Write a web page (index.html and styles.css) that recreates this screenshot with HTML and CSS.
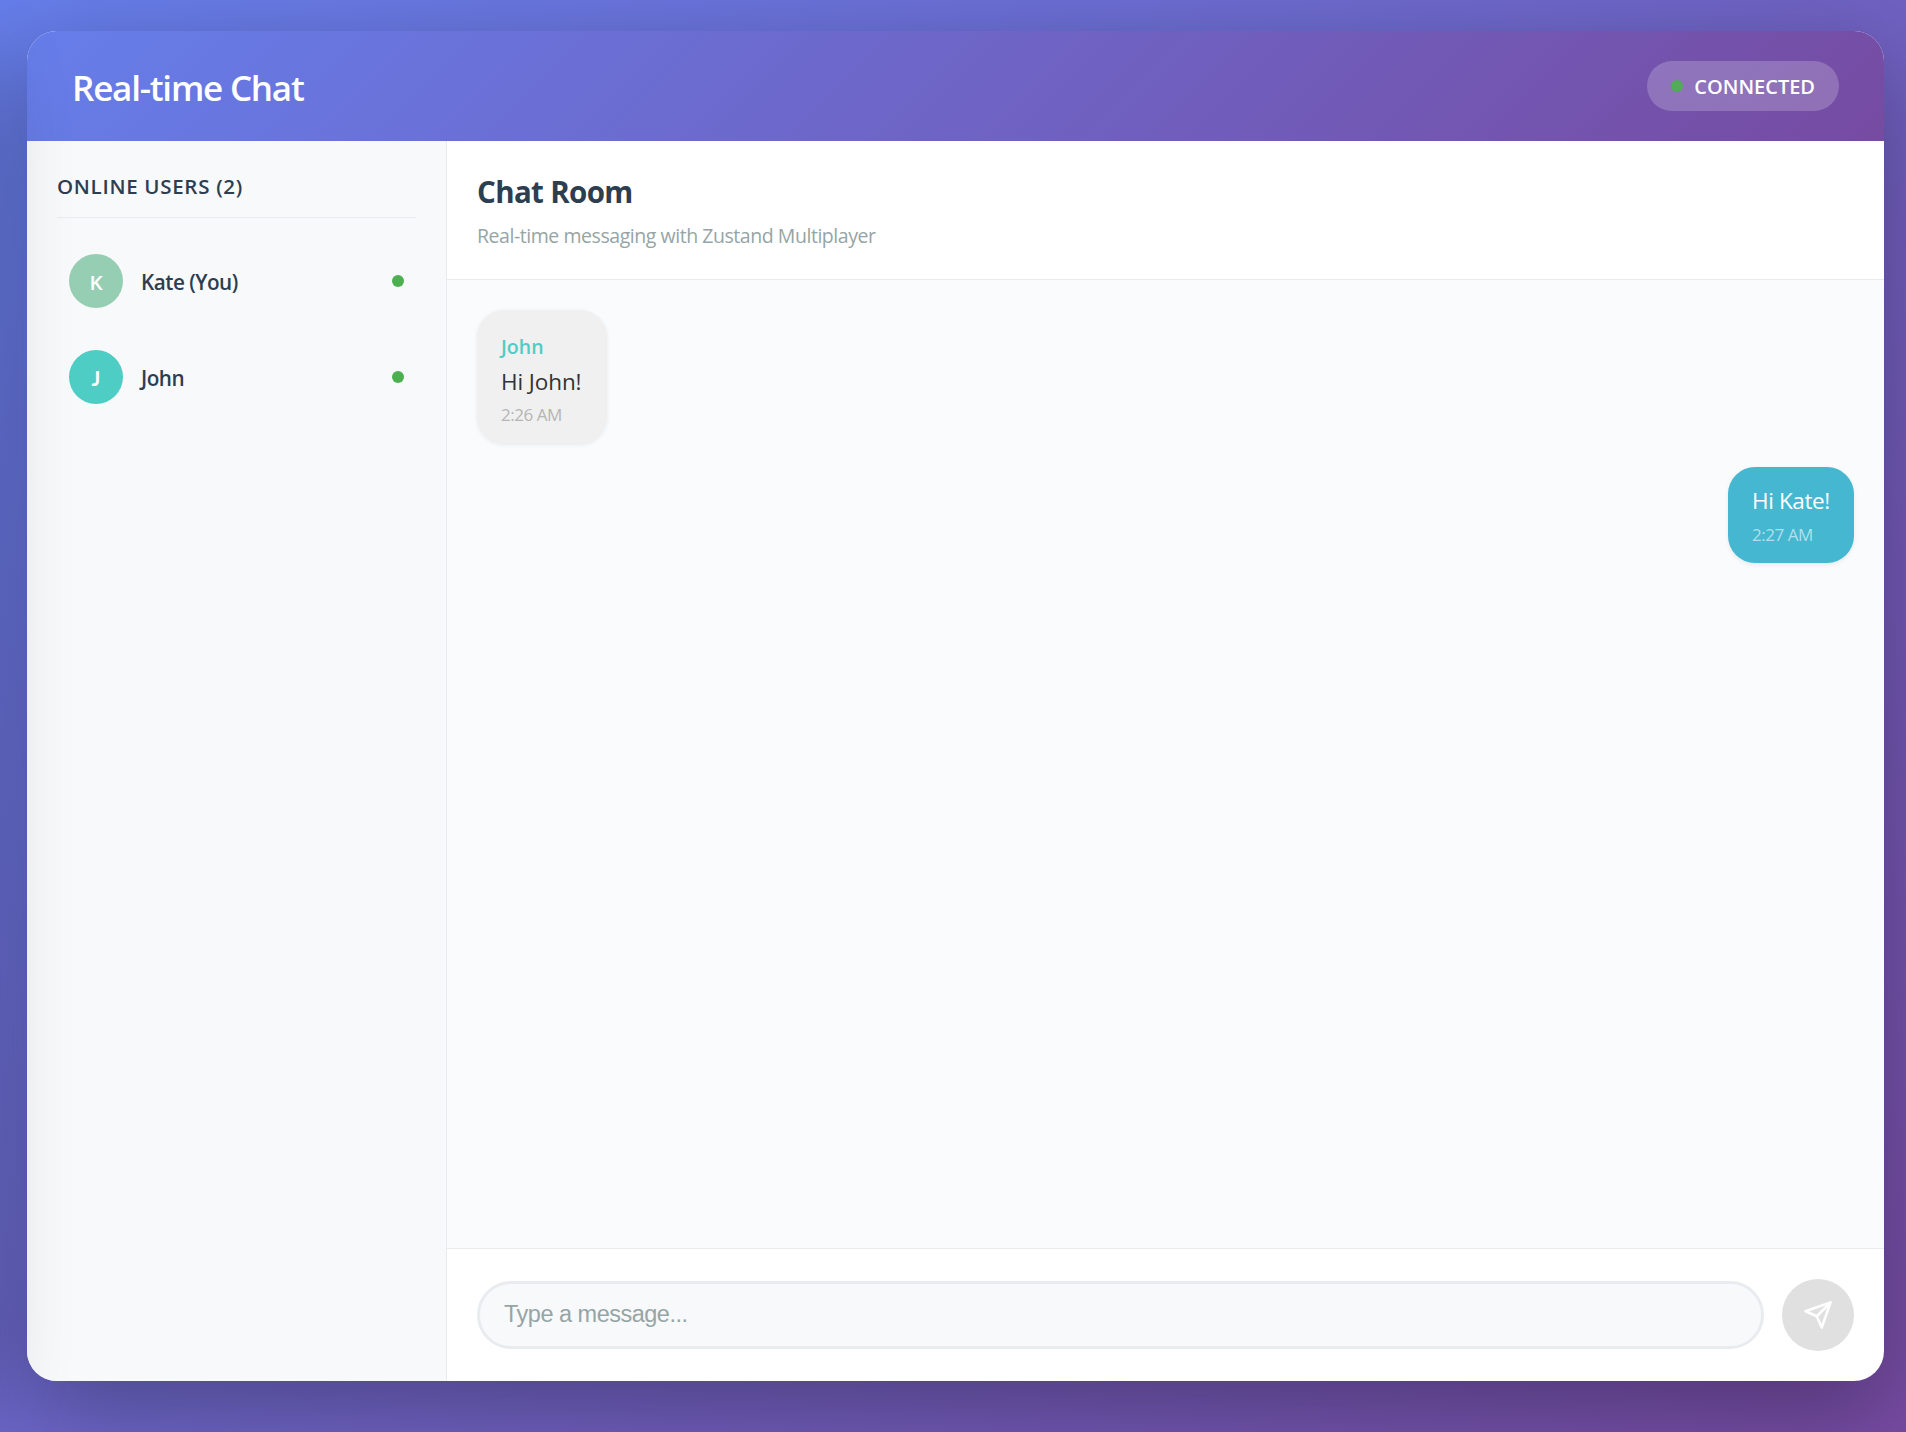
FILE: index.html
```html
<!DOCTYPE html>
<html lang="en">
<head>
<meta charset="utf-8">
<title>Real-time Chat</title>
<link rel="stylesheet" href="styles.css">
</head>
<body>
<div class="app">
  <header class="app-header">
    <h1 class="app-title">Real-time Chat</h1>
    <div class="status"><span class="dot dot-soft"></span><span class="status-text">CONNECTED</span></div>
  </header>
  <div class="app-body">
    <aside class="sidebar">
      <h3 class="sidebar-title">ONLINE USERS (2)</h3>
      <ul class="users">
        <li class="user"><span class="avatar avatar-kate">K</span><span class="user-name">Kate (You)</span><span class="dot"></span></li>
        <li class="user"><span class="avatar avatar-john">J</span><span class="user-name">John</span><span class="dot"></span></li>
      </ul>
    </aside>
    <main class="chat">
      <div class="chat-header">
        <h2 class="chat-title">Chat Room</h2>
        <p class="chat-subtitle">Real-time messaging with Zustand Multiplayer</p>
      </div>
      <div class="messages">
        <div class="bubble bubble-other">
          <div class="sender">John</div>
          <div class="text">Hi John!</div>
          <div class="time">2:26 AM</div>
        </div>
        <div class="bubble bubble-own">
          <div class="text">Hi Kate!</div>
          <div class="time">2:27 AM</div>
        </div>
      </div>
      <form class="composer">
        <input class="composer-input" type="text" placeholder="Type a message...">
        <button class="send" type="button" aria-label="Send">
          <svg class="send-icon" viewBox="0 0 24 24" fill="none" stroke="currentColor" stroke-width="2" stroke-linecap="round" stroke-linejoin="round"><path d="M22 2 11 13"/><path d="M22 2 15 22 11 13 2 9Z"/></svg>
        </button>
      </form>
    </main>
  </div>
</div>
<div class="edge-shade"></div>
</body>
</html>
```
FILE: styles.css
```css
* { box-sizing: border-box; margin: 0; padding: 0; }

body {
  height: 100vh;
  padding: 31px 22px 51px 27px;
  overflow: hidden;
  position: relative;
  font-family: "Open Sans", "Noto Sans", sans-serif;
  color: #2c3e50;
  background: linear-gradient(135deg, #667eea 0%, #764ba2 100%);
}

.app {
  height: 100%;
  display: flex;
  flex-direction: column;
  overflow: hidden;
  background: #fff;
  border-radius: 30px;
  box-shadow: 0 30px 90px rgba(0, 0, 0, .3);
}

/* Shadow cast across the left side of the page */
.edge-shade {
  position: absolute;
  top: 31px;
  bottom: 51px;
  left: -322px;
  width: 300px;
  border-radius: 30px;
  box-shadow: 0 30px 90px rgba(0, 0, 0, .3);
  pointer-events: none;
}

.app-header {
  height: 110px;
  padding: 0 45px;
  display: flex;
  align-items: center;
  justify-content: space-between;
  color: #fff;
  background: linear-gradient(135deg, #667eea 0%, #764ba2 100%);
}

.app-title {
  padding-top: 3px;
  font-size: 35px;
  font-weight: 600;
  line-height: 48px;
  letter-spacing: -1.22px;
}

.status {
  height: 50px;
  padding: 0 24px;
  display: flex;
  align-items: center;
  gap: 11px;
  border-radius: 25px;
  background: rgba(255, 255, 255, .2);
}

.status-text { padding-top: 2px; font-size: 20px; font-weight: 600; line-height: 28px; }

.dot { width: 12px; height: 12px; flex: none; border-radius: 50%; background: #4caf50; }
.dot-soft { opacity: .93; }

.app-body { flex: 1; min-height: 0; display: flex; }

.sidebar {
  width: 420px;
  flex: none;
  padding: 30px;
  background: #f8f9fb;
  border-right: 1px solid #e9ecef;
}

.sidebar-title {
  margin-bottom: 24px;
  padding: 1px 0 16px;
  border-bottom: 1px solid #e9ecef;
  font-size: 20.5px;
  font-weight: 600;
  line-height: 29px;
  letter-spacing: .7px;
}

.users { display: flex; flex-direction: column; gap: 18px; list-style: none; }
.user { height: 78px; padding: 12px; display: flex; align-items: center; gap: 18px; }

.avatar {
  width: 54px;
  height: 54px;
  padding-top: 1px;
  display: flex;
  align-items: center;
  justify-content: center;
  border-radius: 50%;
  color: #fff;
  font-size: 20.5px;
  font-weight: 600;
}
.avatar-kate { background: #96ceb4; }
.avatar-john { background: #4ecdc4; font-family: "Lato", sans-serif; font-weight: 700; }

.user-name { flex: 1; padding-top: 2px; font-size: 20.7px; font-weight: 600; letter-spacing: -.5px; }

.chat { flex: 1; min-width: 0; display: flex; flex-direction: column; }
.chat-header { padding: 30px 30px 27px; border-bottom: 1px solid #e9ecef; }

.chat-title {
  margin-bottom: 7px;
  font-size: 29.5px;
  font-weight: 700;
  line-height: 41px;
  letter-spacing: -.65px;
}

.chat-subtitle { color: #95a5a6; font-size: 19.5px; line-height: 33px; letter-spacing: -.45px; }

.messages {
  flex: 1;
  padding: 30px;
  display: flex;
  flex-direction: column;
  align-items: flex-start;
  gap: 24px;
  background: #fafbfd;
}

.bubble {
  padding: 18px 24px 16px;
  border-radius: 27px;
  box-shadow: 0 1.5px 4.5px rgba(0, 0, 0, .07);
}
.bubble-other { width: 129.5px; background: #f0f0f0; color: #333; }
.bubble-own { width: 126px; align-self: flex-end; background: #45b7d1; color: #fff; }
.bubble-own .text { letter-spacing: -.4px; }

.sender { margin-bottom: 1px; color: #4ecdc4; font-size: 19.5px; font-weight: 600; line-height: 37px; }
.text { font-size: 22.5px; line-height: 31px; white-space: nowrap; letter-spacing: -.1px; }
.time { margin-top: 5px; font-size: 17px; line-height: 25px; letter-spacing: -.45px; color: #b5b5b5; }
.bubble-own .time { margin-top: 6px; color: #b0e0eb; }

.composer {
  height: 133px;
  padding: 0 30px;
  display: flex;
  align-items: center;
  gap: 18px;
  border-top: 1px solid #e9ecef;
}

.composer-input {
  flex: 1;
  height: 68px;
  padding: 0 24px 2px;
  border: 3px solid #e9ecef;
  border-radius: 37px;
  outline: none;
  background: #f8f9fb;
  font: 23.5px "Liberation Sans", sans-serif;
  letter-spacing: -.5px;
}
.composer-input::placeholder { color: #95a5a6; }

.send {
  width: 72px;
  height: 72px;
  display: flex;
  align-items: center;
  justify-content: center;
  border: 0;
  border-radius: 50%;
  background: #e0e0e0;
  color: #fff;
}
.send-icon { width: 30px; height: 30px; }
```
